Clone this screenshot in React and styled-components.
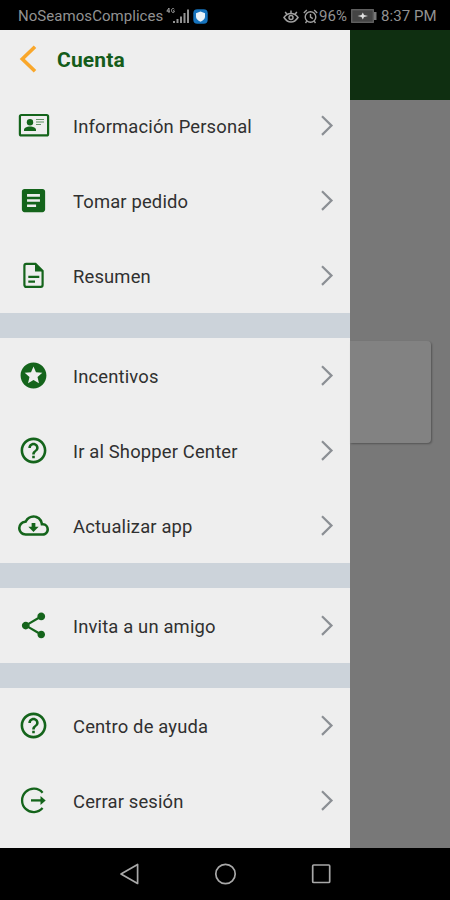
import React from "react"
import styled, { createGlobalStyle } from "styled-components"
import { MdArticle, MdHelpOutline, MdOutlineCloudDownload, MdShare, MdStars } from "react-icons/md"

const GlobalStyle = createGlobalStyle`
	* {
		box-sizing: border-box;
	}

	body {
		margin: 0;
		background: #000;
		font-family: Roboto, "Liberation Sans", sans-serif;
	}
`

const Phone = styled.div`
	display: flex;
	flex-direction: column;
	width: 450px;
	height: 900px;
	overflow: hidden;
	background: #000;
`

const StatusBar = styled.header`
	display: flex;
	align-items: center;
	justify-content: space-between;
	flex: none;
	height: 30px;
	padding: 2px 14px 0 18px;
	color: #929292;
	font-size: 15px;
	line-height: 28px;

	svg {
		display: block;
		flex: none;
	}
`

const StatusGroup = styled.div`
	display: flex;
	align-items: center;
`

const StatusText = styled.span`
	width: ${props => props.$width}px;
	letter-spacing: 0.05px;
	white-space: nowrap;
`

const Gap = styled.span`
	width: ${props => props.$width}px;
`

const Screen = styled.div`
	display: flex;
	flex: 1;
	min-height: 0;
`

const Drawer = styled.nav`
	flex: none;
	width: 350px;
	background: #eee;
`

const DrawerHeader = styled.div`
	display: flex;
	align-items: center;
	height: 58px;
	padding: 0 0 1px 19px;

	h1 {
		margin: 0 0 0 20px;
		padding-top: 3px;
		color: #145c1a;
		font-size: 21px;
		font-weight: 700;
		line-height: 28px;
		letter-spacing: 0.15px;
	}
`

const Group = styled.ul`
	margin: 0;
	padding: 0;
	list-style: none;

	& + & {
		border-top: 25px solid #ccd3da;
	}
`

const Row = styled.li`
	display: flex;
	align-items: center;
	height: 75px;
	padding: 0 16px 0 18px;
	color: #303030;
	font-size: 18.4px;

	svg {
		display: block;
		flex: none;
		overflow: visible;
	}
`

const RowIcon = styled.span`
	width: 31px;
	height: 31px;
	margin-right: 24px;
	color: #14641b;
`

const Label = styled.span`
	flex: 1;
	padding-top: 2px;
	letter-spacing: 0.16px;
	white-space: nowrap;
`

const Backdrop = styled.main`
	flex: 1;
	background: #787878;
`

const AppBar = styled.div`
	height: 70px;
	background: #0f2f11;
`

const Card = styled.div`
	height: 102px;
	margin: 241px 19px 0 0;
	border-radius: 0 4px 4px 0;
	background: #828282;
	box-shadow: 1px 1px 2px rgba(0, 0, 0, 0.3);
`

const NavBar = styled.footer`
	display: flex;
	justify-content: space-between;
	flex: none;
	height: 52px;
	padding: 14px 117px 0;

	svg {
		display: block;
	}
`

const SignalIcon = () => (
	<svg width="25" height="18" viewBox="0 0 25 18">
		<g fill="none" stroke="#a0a0a0" strokeWidth="1">
			<path d="M3 6V1L0.8 4.2H4M8.3 2.2C7.5 1 5.5 1.2 5.5 3.5S8 6 8.2 5V3.8H7" />
		</g>
		<g fill="#929292">
			<path d="M7 14h2v2H7zM10.500 12h2v4h-2zM14 9.500h2V16h-2zM17.500 6h2v10h-2zM21 2.500h2V16h-2z" />
		</g>
	</svg>
)

const ShieldIcon = () => (
	<svg width="15" height="15" viewBox="0 0 15 15">
		<rect x="0.3" y="0.3" width="14.4" height="14.4" rx="4" fill="#1673bd" />
		<path d="M7.5 2.6l4.500 1.600v3.400c0 2.400-1.800 4-4.500 5.200C4.800 11.600 3 10 3 7.600V4.200z" fill="#e9f2f8" />
	</svg>
)

const EyeIcon = () => (
	<svg width="16" height="15" viewBox="0 0 16 15" fill="none" stroke="#a0a0a0" strokeWidth="1.5">
		<path d="M1 8.500C3 5.500 5.300 4.500 8 4.500s5 1 7 4c-2 3-4.300 4.500-7 4.500s-5-1.500-7-4.500z" />
		<path d="M8 4.500V1.500M4 5.500L2.200 2.800M12 5.500l1.800-2.700" />
		<circle cx="8" cy="8.500" r="2" />
	</svg>
)

const AlarmIcon = () => (
	<svg width="15" height="15" viewBox="0 0 15 15" fill="none" stroke="#a0a0a0" strokeWidth="1.4">
		<circle cx="7.5" cy="8" r="5.3" />
		<path d="M7.500 5v3.200l2.300 1.500M0.800 4l3-2.900M14.200 4l-3-2.900M3.800 12.200l-1.300 1.800M11.200 12.200l1.300 1.800" />
	</svg>
)

const BatteryIcon = () => (
	<svg width="26" height="14" viewBox="0 0 26 14">
		<rect x="0.7" y="0.7" width="21.600" height="12.600" fill="#444" stroke="#686868" strokeWidth="1.200" />
		<rect x="23" y="3" width="2.500" height="8" fill="#777" />
		<path d="M6.500 7l4-1 1.300-2.500 1.200 2.500 4 1-4 1-1.200 2.500L10.500 8z" fill="#e0e0e0" />
	</svg>
)

const BackIcon = () => (
	<svg width="18" height="28" viewBox="0 0 18 28" fill="none" stroke="#f9a72b" strokeWidth="3.6">
		<path d="M16 1.700L3.300 14 16 26.300" />
	</svg>
)

const ChevronIcon = () => (
	<svg width="14" height="22" viewBox="0 0 14 22" fill="none" stroke="#8b8f94" strokeWidth="2.2">
		<path d="M2 1.300l9.500 9.300L2 19.900" />
	</svg>
)

const IdCardIcon = () => (
	<svg width="31" height="31" viewBox="0 0 31 31" fill="currentColor">
		<rect x="1.900" y="5" width="28.200" height="20.400" rx="1.500" fill="none" stroke="currentColor" strokeWidth="2.200" />
		<circle cx="12" cy="12.300" r="3.200" />
		<path d="M6 21v-1.200c0-2 3-3.300 6-3.300s6 1.300 6 3.300V21z" />
		<path d="M18 9.500h8M18 12h8M18 14.500h5" stroke="currentColor" strokeWidth="1.200" opacity="0.650" />
	</svg>
)

const FileIcon = () => (
	<svg width="31" height="31" viewBox="0 0 31 31" fill="none" stroke="currentColor" strokeWidth="2.2">
		<path d="M17.500 3.900H8.200a1.800 1.800 0 0 0-1.800 1.800v19.400a1.800 1.800 0 0 0 1.800 1.800h14.600a1.800 1.800 0 0 0 1.800-1.800V11z" />
		<path d="M17 3v8.500h8z" fill="currentColor" stroke="none" />
		<path d="M10.300 16.800h11M10.300 21.600H17" />
	</svg>
)

const LogoutIcon = () => (
	<svg width="31" height="31" viewBox="0 0 31 31" fill="none" stroke="currentColor" strokeWidth="2.3">
		<path d="M24.600 7.700a11.700 11.700 0 1 0 0 15.400" />
		<path d="M13 15.400h11" />
		<path d="M22.500 10.900l5.200 4.500-5.200 4.500z" fill="currentColor" stroke="none" />
	</svg>
)

const groups = [
	[
		{ label: "Información Personal", icon: IdCardIcon },
		{ label: "Tomar pedido", icon: MdArticle },
		{ label: "Resumen", icon: FileIcon }
	],
	[
		{ label: "Incentivos", icon: MdStars },
		{ label: "Ir al Shopper Center", icon: MdHelpOutline },
		{ label: "Actualizar app", icon: MdOutlineCloudDownload }
	],
	[{ label: "Invita a un amigo", icon: MdShare }],
	[
		{ label: "Centro de ayuda", icon: MdHelpOutline },
		{ label: "Cerrar sesión", icon: LogoutIcon }
	]
]

const App = () => (
	<Phone>
		<GlobalStyle />
		<StatusBar>
			<StatusGroup>
				<StatusText $width={148}>NoSeamosComplices</StatusText>
				<SignalIcon />
				<Gap $width={2} />
				<ShieldIcon />
			</StatusGroup>
			<StatusGroup>
				<EyeIcon />
				<Gap $width={4} />
				<AlarmIcon />
				<Gap $width={1} />
				<StatusText $width={32}>96%</StatusText>
				<BatteryIcon />
				<Gap $width={4} />
				<StatusText $width={55}>8:37 PM</StatusText>
			</StatusGroup>
		</StatusBar>
		<Screen>
			<Drawer>
				<DrawerHeader>
					<BackIcon />
					<h1>Cuenta</h1>
				</DrawerHeader>
				{groups.map((rows, i) => (
					<Group key={i}>
						{rows.map(({ label, icon: Icon }) => (
							<Row key={label}>
								<RowIcon>
									<Icon size={31} />
								</RowIcon>
								<Label>{label}</Label>
								<ChevronIcon />
							</Row>
						))}
					</Group>
				))}
			</Drawer>
			<Backdrop>
				<AppBar />
				<Card />
			</Backdrop>
		</Screen>
		<NavBar>
			<svg width="24" height="24" viewBox="0 0 24 24" fill="none" stroke="#a8a8a8" strokeWidth="1.7" strokeLinejoin="round">
				<path d="M20.600 2.500v19L4 12z" />
			</svg>
			<svg width="24" height="24" viewBox="0 0 24 24" fill="none" stroke="#a8a8a8" strokeWidth="1.7">
				<circle cx="12.500" cy="12" r="9.700" />
			</svg>
			<svg width="24" height="24" viewBox="0 0 24 24" fill="none" stroke="#a8a8a8" strokeWidth="1.7">
				<rect x="3.700" y="3" width="17" height="17.500" rx="1" />
			</svg>
		</NavBar>
	</Phone>
)

export default App
